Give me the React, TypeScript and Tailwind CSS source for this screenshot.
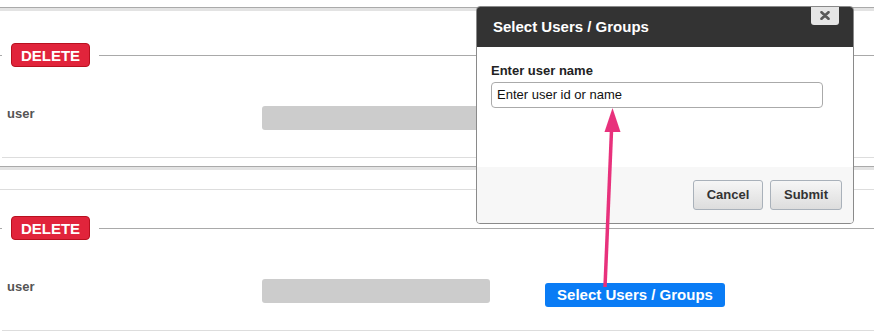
import React from "react";

function Separator() {
  return <div className="h-[4px] border-t border-[#aaaaaa] bg-[#e3e3e3]" />;
}

function DeleteRow() {
  return (
    <div className="flex h-[24px] items-center">
      <div className="h-px w-[2px] bg-[#a9a9a9]" />
      <div className="px-[9px]">
        <button className="flex h-[24px] w-[79px] items-center justify-center rounded-[4px] border border-[#b8101f] bg-[#e1243b] text-[15px] font-bold leading-none text-white">
          DELETE
        </button>
      </div>
      <div className="h-px flex-1 bg-[#a9a9a9]" />
    </div>
  );
}

function Panel({ header }: { header: boolean }) {
  return (
    <div className="bg-white">
      {header ? (
        <>
          <div className="h-[19px]" />
          <div className="h-px bg-[#dddddd]" />
          <div className="h-[26px]" />
        </>
      ) : (
        <div className="h-[32px]" />
      )}
      <DeleteRow />
      <div className="mt-[39px] flex items-start">
        <div className="w-[262px] pl-[7px] text-[13px] font-bold leading-[15px] text-[#555555]">user</div>
        <div className="h-[24px] w-[228px] rounded-[3px] bg-[#cccccc]" />
      </div>
      <div className="ml-[2px] mt-[27px] h-px bg-[#dddddd]" />
      {!header && <div className="h-[8px]" />}
    </div>
  );
}

export default function App() {
  return (
    <div className="relative h-[333px] w-[874px] overflow-hidden bg-white font-['Liberation_Sans',Arial,sans-serif]">
      <div className="h-[7px]" />
      <Separator />
      <Panel header={false} />
      <Separator />
      <Panel header />

      {/* Modal */}
      <div className="absolute left-[476px] top-[6px] w-[378px] overflow-hidden rounded-[4px] border border-[#8a8a8a] bg-white">
        <div className="relative flex h-[40px] items-center bg-[#333333] pl-[16px] text-[15px] font-bold text-white">
          Select Users / Groups
          <div className="absolute -top-px right-[14px] flex h-[19px] w-[28px] items-center justify-center rounded-b-[3px] bg-[#e6e6e6]">
            <svg width="10" height="9" viewBox="0 0 10 9">
              <path d="M1.5 1.2 L8.5 7.8 M8.5 1.2 L1.5 7.8" stroke="#5a5a5a" strokeWidth="2.6" strokeLinecap="round" />
            </svg>
          </div>
        </div>
        <div className="h-[120px] px-[14px] pt-[16px]">
          <div className="text-[13px] font-bold leading-[15px] text-[#222222]">Enter user name</div>
          <div className="mt-[4px] flex h-[26px] w-[332px] items-center rounded-[4px] border border-[#aaaaaa] pl-[5px] text-[13px] text-[#111111]">
            Enter user id or name
          </div>
        </div>
        <div className="flex h-[56px] items-start justify-end gap-[7px] bg-[#f7f7f7] pr-[11px] pt-[13px]">
          <button className="flex h-[30px] w-[70px] items-center justify-center rounded-[3px] border border-[#a9b1ba] bg-linear-to-b from-[#f6f6f6] to-[#dddddd] text-[13px] font-bold text-[#333333]">
            Cancel
          </button>
          <button className="flex h-[30px] w-[72px] items-center justify-center rounded-[3px] border border-[#a9b1ba] bg-linear-to-b from-[#f6f6f6] to-[#dddddd] text-[13px] font-bold text-[#333333]">
            Submit
          </button>
        </div>
      </div>

      {/* Annotation label */}
      <div className="absolute left-[545px] top-[283px] flex h-[24px] w-[180px] items-center justify-center rounded-[3px] bg-[#0a7cf5] text-[15px] font-bold text-white">
        Select Users / Groups
      </div>

      {/* Annotation arrow */}
      <svg className="pointer-events-none absolute left-0 top-0" width="874" height="333" viewBox="0 0 874 333">
        <line x1="605" y1="287" x2="611.6" y2="128" stroke="#e8317c" strokeWidth="3.5" />
        <polygon points="612.5,108 604.5,132 620.5,132" fill="#e8317c" />
      </svg>
    </div>
  );
}
